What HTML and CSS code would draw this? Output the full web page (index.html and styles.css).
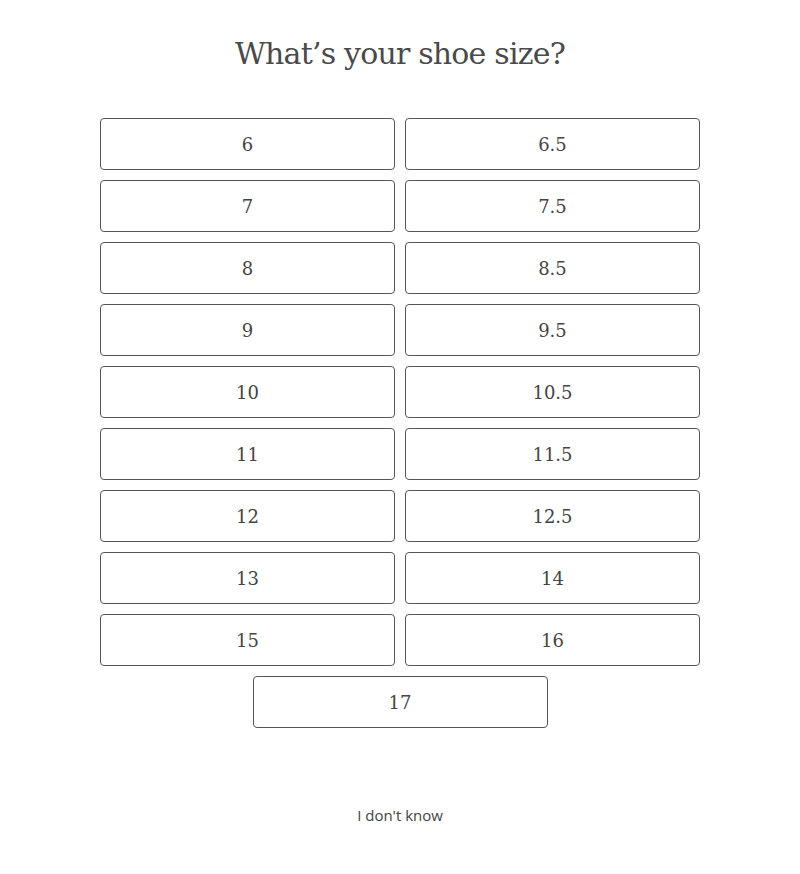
FILE: index.html
```html
<!DOCTYPE html>
<html>
<head>
<meta charset="utf-8">
<link rel="stylesheet" href="styles.css">
</head>
<body>
<main class="page">
  <h1 class="title">What’s your shoe size?</h1>
  <div class="sizes">
    <button class="size">6</button>
    <button class="size">6.5</button>
    <button class="size">7</button>
    <button class="size">7.5</button>
    <button class="size">8</button>
    <button class="size">8.5</button>
    <button class="size">9</button>
    <button class="size">9.5</button>
    <button class="size">10</button>
    <button class="size">10.5</button>
    <button class="size">11</button>
    <button class="size">11.5</button>
    <button class="size">12</button>
    <button class="size">12.5</button>
    <button class="size">13</button>
    <button class="size">14</button>
    <button class="size">15</button>
    <button class="size">16</button>
    <button class="size size-last">17</button>
  </div>
  <a class="unknown" href="#">I don't know</a>
</main>
</body>
</html>
```
FILE: styles.css
```css
html, body {
  margin: 0;
  padding: 0;
  background: #fff;
}
.page {
  width: 600px;
  margin: 0 auto;
  display: flex;
  flex-direction: column;
  align-items: stretch;
}
.title {
  margin: 32px 0 0;
  height: 86px;
  font-family: "DejaVu Serif", serif;
  font-weight: normal;
  font-size: 30px;
  line-height: 44px;
  color: #4a4a4a;
  text-align: center;
  letter-spacing: -0.8px;
}
.sizes {
  display: grid;
  grid-template-columns: 1fr 1fr;
  gap: 10px;
}
.size {
  height: 52px;
  border: 1px solid #555;
  border-radius: 4px;
  background: #fff;
  font-family: "DejaVu Serif", serif;
  font-size: 18px;
  color: #444;
  padding: 0;
}
.size-last {
  grid-column: 1 / span 2;
  justify-self: center;
  width: 295px;
}
.unknown {
  margin-top: 77px;
  align-self: center;
  font-family: "Open Sans", sans-serif;
  font-size: 15px;
  color: #444;
  text-decoration: none;
}
```
